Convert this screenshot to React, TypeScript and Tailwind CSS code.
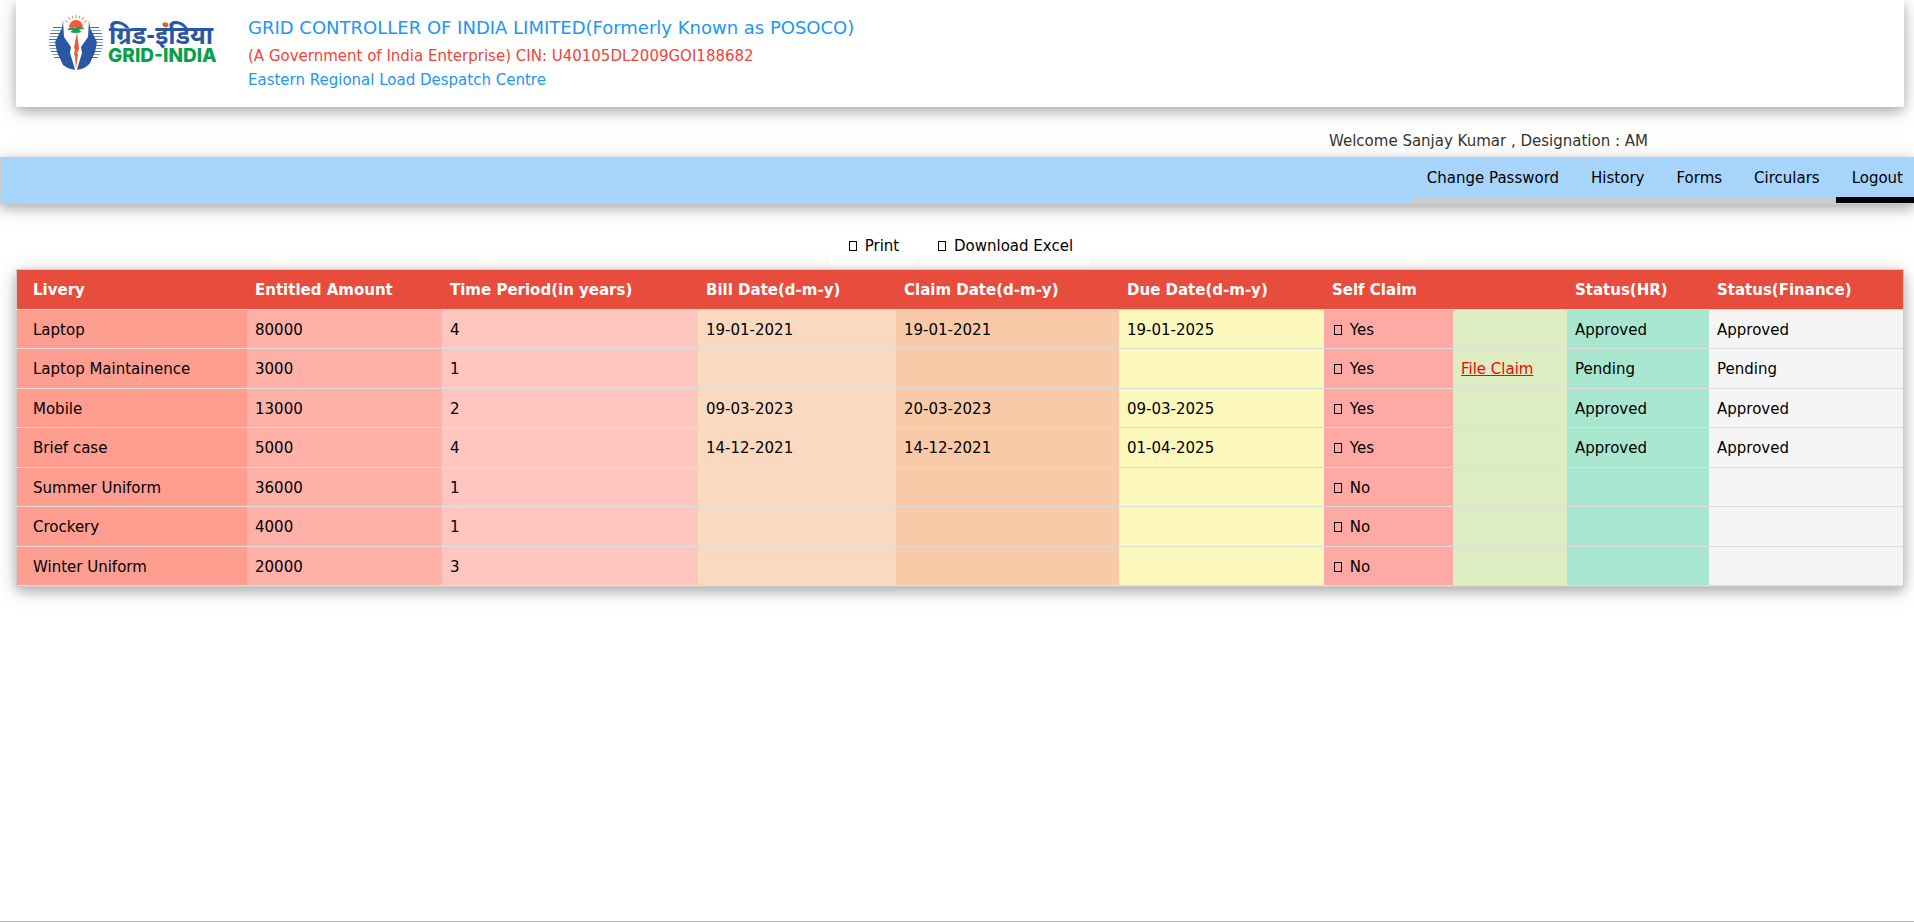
const card =
  'shadow-[0_4px_10px_0_rgba(0,0,0,0.2),0_4px_20px_0_rgba(0,0,0,0.19)]';

const columns = [
  { title: 'Livery', width: 'w-[230px]', tint: 'bg-[#ff9d90]' },
  { title: 'Entitled Amount', width: 'w-[195px]', tint: 'bg-[#ffb1a8]' },
  { title: 'Time Period(in years)', width: 'w-[256px]', tint: 'bg-[#ffc5bf]' },
  { title: 'Bill Date(d-m-y)', width: 'w-[198px]', tint: 'bg-[#f9d9c0]' },
  { title: 'Claim Date(d-m-y)', width: 'w-[223px]', tint: 'bg-[#f8caa8]' },
  { title: 'Due Date(d-m-y)', width: 'w-[205px]', tint: 'bg-[#fcf7bb]' },
  { title: 'Self Claim', width: 'w-[129px]', tint: 'bg-[#ffa9a4]' },
  { title: '', width: 'w-[114px]', tint: 'bg-[#ddecc1]' },
  { title: 'Status(HR)', width: 'w-[142px]', tint: 'bg-[#a8e6cf]' },
  { title: 'Status(Finance)', width: 'w-[194px]', tint: 'bg-[#f5f5f5]' },
];

const rows = [
  ['Laptop', '80000', '4', '19-01-2021', '19-01-2021', '19-01-2025', 'Yes', '', 'Approved', 'Approved'],
  ['Laptop Maintainence', '3000', '1', '', '', '', 'Yes', 'File Claim', 'Pending', 'Pending'],
  ['Mobile', '13000', '2', '09-03-2023', '20-03-2023', '09-03-2025', 'Yes', '', 'Approved', 'Approved'],
  ['Brief case', '5000', '4', '14-12-2021', '14-12-2021', '01-04-2025', 'Yes', '', 'Approved', 'Approved'],
  ['Summer Uniform', '36000', '1', '', '', '', 'No', '', '', ''],
  ['Crockery', '4000', '1', '', '', '', 'No', '', '', ''],
  ['Winter Uniform', '20000', '3', '', '', '', 'No', '', '', ''],
];

const links = ['Change Password', 'History', 'Forms', 'Circulars'];

function Box() {
  return <span aria-hidden="true" className="ml-0.5 mr-[3px] inline-block h-[10px] w-2 border border-current" />;
}

function Logo() {
  const stripes = [15, 18, 21, 24, 27, 30, 33, 36, 39, 42, 45];
  return (
    <svg viewBox="0 0 170 60" className="h-[60px] w-[170px] shrink-0" role="img" aria-label="Grid-India">
      {stripes.map((y, i) => {
        const half = Math.sqrt(27 * 27 - (y - 29) * (y - 29));
        return (
          <path
            key={y}
            d={`M${28 - half} ${y + 0.5}H15M41 ${y + 0.5}H${28 + half}`}
            stroke={i % 2 ? '#7f9fd0' : '#3f69b0'}
            strokeWidth="1.2"
          />
        );
      })}
      <path d="M15 8L14 16L7 30L9 40L15 53Q19 56 23 57L27 58L26 54L22 41L23 35L16 25Z" fill="#2957a4" />
      <path d="M41 8L42 16L49 30L47 40L42 51Q38 56 33 57L29 58L30 54L34 41L33 35L40 25Z" fill="#2957a4" />
      <path d="M29 20L31 37L29 41L30 42L28 57L27 44L26 42L27 37L26 36Z" fill="#f15a30" />
      <path d="M21 15.500A7 7.500 0 0 1 35 15.500Z" fill="#f15a30" />
      <path d="M19 18Q23 14 27 16Q30 14 33 15L37 17Q33 17 31 18L34 20Q27 22 22 20L25 18Z" fill="#16a05a" />
      <path
        d="M28 3V6M24 3.500L25 6.500M20.500 5L22 8M17 8.500L20 10.500M32 3.500L31 6.500M35.500 5L34 8M39 8.500L36 10.500"
        stroke="#f4805f"
        strokeWidth="1"
      />
      <text x="61" y="32" fontSize="25" fontWeight="700" fill="#2957a4" className="font-['Noto_Sans_Devanagari','Noto_Sans',sans-serif]">
        ग्रिड-इंडिया
      </text>
      <circle cx="118" cy="13" r="2.4" fill="#f15a30" />
      <text x="60" y="50" fontSize="19" fontWeight="800" fill="#08a04b" className="font-['Inter',sans-serif]">
        GRID-INDIA
      </text>
    </svg>
  );
}

export default function App() {
  return (
    <div className="min-h-screen overflow-x-hidden border-b border-[#b5b5b5] bg-white font-['DejaVu_Sans',Verdana,sans-serif] text-[15px] leading-normal text-black">
      <header className={`ml-4 mr-[10px] flex h-[107px] items-start bg-white pl-8 ${card}`}>
        <div className="pt-3">
          <Logo />
        </div>
        <div className="pl-[30px] pt-[14px] text-[#2196f3]">
          <h1 className="text-[18px] leading-[28px]">GRID CONTROLLER OF INDIA LIMITED(Formerly Known as POSOCO)</h1>
          <p className="leading-[28px] text-[#f44336]">(A Government of India Enterprise) CIN: U40105DL2009GOI188682</p>
          <p className="leading-[20px]">Eastern Regional Load Despatch Centre</p>
        </div>
      </header>

      <p className="ml-auto mt-[23px] w-[585px] pb-1 leading-[23px] text-[#333]">Welcome Sanjay Kumar , Designation : AM</p>

      <nav className={`flex h-[47px] justify-end border border-r-0 border-[#ccc] bg-[#a6d4fb] ${card}`}>
        {links.map((label) => (
          <a key={label} href="#" className="border-b-[6px] border-[#ccc] px-4 pt-[9px]">
            {label}
          </a>
        ))}
        <a href="#" className="border-b-[6px] border-black pl-4 pr-[11px] pt-[9px]">
          Logout
        </a>
      </nav>

      <main className="ml-4 mr-[10px] pt-[22px]">
        <div className="flex justify-center gap-[5px] pb-1">
          <button type="button" className="h-[39px] bg-white px-4 pt-px">
            <Box /> Print
          </button>
          <button type="button" className="h-[39px] bg-white px-4 pt-px">
            <Box /> Download Excel
          </button>
        </div>

        <div className={`border border-[#ccc] ${card}`}>
          <table className="w-full table-fixed border-collapse text-left">
            <thead>
              <tr className="border-b border-[#ddd] bg-[#e84c3d] text-white">
                {columns.map((c) => (
                  <th key={c.title} scope="col" className={`${c.width} whitespace-nowrap pb-[7px] pl-2 pt-[9px] font-bold first:pl-4`}>
                    {c.title}
                  </th>
                ))}
              </tr>
            </thead>
            <tbody>
              {rows.map((row) => (
                <tr key={row[0]} className="border-b border-[#ddd]">
                  {row.map((cell, i) => (
                    <td key={i} className={`${columns[i].tint} whitespace-nowrap pb-[7px] pl-2 pt-[9px] first:pl-4`}>
                      {i === 6 && <Box />}
                      {i === 6 && ' '}
                      {i === 7 && cell ? (
                        <a href="#" className="text-[#f00] underline">
                          {cell}
                        </a>
                      ) : (
                        cell
                      )}
                    </td>
                  ))}
                </tr>
              ))}
            </tbody>
          </table>
        </div>
      </main>
    </div>
  );
}
